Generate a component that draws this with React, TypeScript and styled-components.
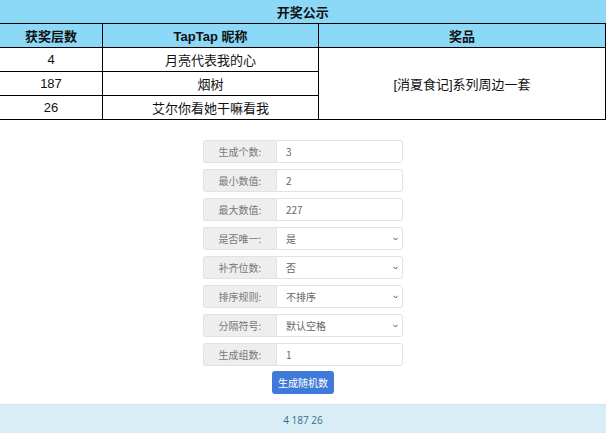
import React from "react";
import styled, { createGlobalStyle } from "styled-components";

const Global = createGlobalStyle`
  html, body { margin: 0; padding: 0; background: #fff; }
  body { font-family: "Noto Sans CJK SC", "Noto Sans", sans-serif; }
`;

const Page = styled.div`
  width: 606px;
  display: flex;
  flex-direction: column;
  align-items: center;
`;

const Table = styled.table`
  width: 606px;
  border-collapse: collapse;
  font-family: "Liberation Sans", "Noto Sans CJK SC", sans-serif;
  font-size: 13px;
  color: #111;
`;

const TitleCell = styled.th`
  background: #8cd8f7;
  height: 23px;
  padding: 0;
  font-weight: bold;
  border: none;
  border-bottom: 1px solid #000;
`;

const HeadCell = styled.th<{ $w?: number; $first?: boolean }>`
  background: #8cd8f7;
  height: 23px;
  padding: 0;
  font-weight: bold;
  border: 1px solid #000;
  border-left: ${(p) => (p.$first ? "none" : "1px solid #000")};
  width: ${(p) => (p.$w ? `${p.$w}px` : "auto")};
`;

const Cell = styled.td<{ $first?: boolean }>`
  height: 23px;
  padding: 0;
  text-align: center;
  border: 1px solid #000;
  border-left: ${(p) => (p.$first ? "none" : "1px solid #000")};
`;

const Form = styled.div`
  width: 200px;
  margin-top: 20px;
  display: flex;
  flex-direction: column;
  gap: 6px;
  font-family: "Noto Sans CJK SC", "Noto Sans", sans-serif;
  font-size: 10px;
  color: #555;
`;

const Group = styled.div`
  display: flex;
  height: 23px;
`;

const Label = styled.div`
  width: 72px;
  flex: none;
  display: flex;
  align-items: center;
  justify-content: center;
  background: #eeeeee;
  border: 1px solid #e2e2e2;
  border-right: none;
  border-radius: 3px 0 0 3px;
  color: #777;
`;

const Field = styled.div`
  position: relative;
  flex: 1;
  display: flex;
  align-items: center;
  padding-left: 9px;
  border: 1px solid #e2e2e2;
  border-radius: 0 3px 3px 0;
  background: #fff;
  color: #666;
`;

const Chevron = styled.svg`
  position: absolute;
  right: 4px;
  top: 9px;
  width: 5px;
  height: 4px;
`;

const Button = styled.button`
  margin-top: 5px;
  width: 62px;
  height: 23px;
  border: none;
  border-radius: 3px;
  background: #3f7ad8;
  color: #fff;
  font-family: "Noto Sans CJK SC", sans-serif;
  font-size: 10px;
  padding: 0;
`;

const Result = styled.div`
  margin-top: 10px;
  width: 606px;
  height: 29px;
  background: #d9edf7;
  border-top: 1px solid #cfe6f2;
  display: flex;
  align-items: center;
  justify-content: center;
  color: #31708f;
  font-family: "Open Sans", "Noto Sans", sans-serif;
  font-size: 10px;
`;

const fields: { label: string; value: string; select?: boolean }[] = [
  { label: "生成个数:", value: "3" },
  { label: "最小数值:", value: "2" },
  { label: "最大数值:", value: "227" },
  { label: "是否唯一:", value: "是", select: true },
  { label: "补齐位数:", value: "否", select: true },
  { label: "排序规则:", value: "不排序", select: true },
  { label: "分隔符号:", value: "默认空格", select: true },
  { label: "生成组数:", value: "1" },
];

const rows = [
  { floor: "4", name: "月亮代表我的心" },
  { floor: "187", name: "烟树" },
  { floor: "26", name: "艾尔你看她干嘛看我" },
];

export default function App() {
  return (
    <Page>
      <Global />
      <Table>
        <thead>
          <tr>
            <TitleCell colSpan={3}>开奖公示</TitleCell>
          </tr>
          <tr>
            <HeadCell $first $w={102}>获奖层数</HeadCell>
            <HeadCell $w={215}>TapTap 昵称</HeadCell>
            <HeadCell>奖品</HeadCell>
          </tr>
        </thead>
        <tbody>
          {rows.map((r, i) => (
            <tr key={r.floor}>
              <Cell $first>{r.floor}</Cell>
              <Cell>{r.name}</Cell>
              {i === 0 && <Cell rowSpan={3}>[消夏食记]系列周边一套</Cell>}
            </tr>
          ))}
        </tbody>
      </Table>
      <Form>
        {fields.map((f) => (
          <Group key={f.label}>
            <Label>{f.label}</Label>
            <Field>
              {f.value}
              {f.select && (
                <Chevron viewBox="0 0 5 4">
                  <path d="M0.5 0.8 L2.5 3 L4.5 0.8" fill="none" stroke="#555" strokeWidth="1" />
                </Chevron>
              )}
            </Field>
          </Group>
        ))}
      </Form>
      <Button>生成随机数</Button>
      <Result>4 187 26</Result>
    </Page>
  );
}
